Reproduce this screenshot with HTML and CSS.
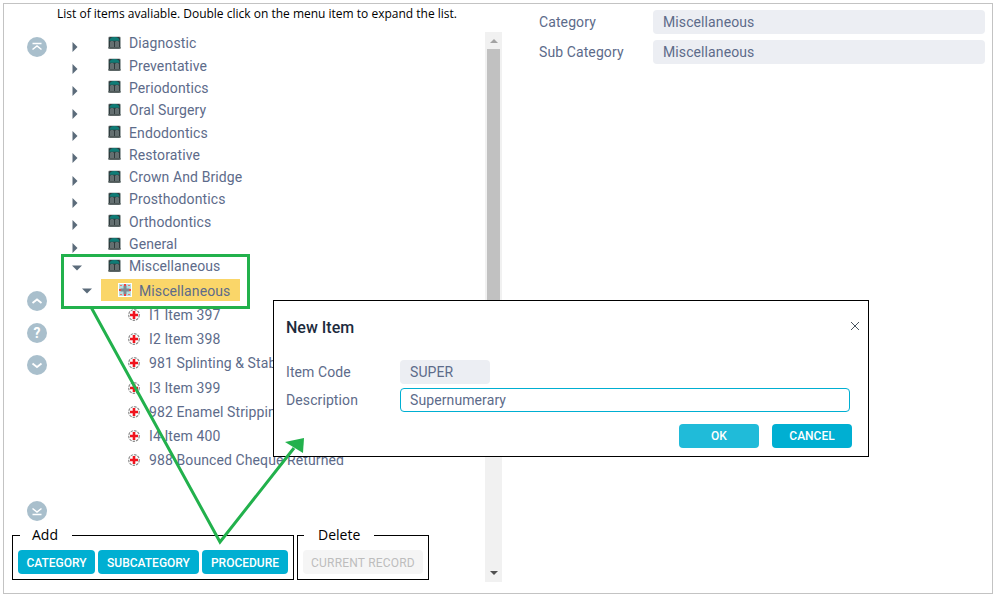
FILE: index.html
```html
<!DOCTYPE html>
<html lang="en">
<head>
<meta charset="utf-8">
<title>Items</title>
<link rel="stylesheet" href="styles.css">
</head>
<body>
<svg class="defs" width="0" height="0" aria-hidden="true">
  <symbol id="cat" viewBox="0 0 13 13">
    <rect x="0" y="0.500" width="13" height="12.500" rx="1.500" fill="#a3abab"/>
    <rect x="1" y="1" width="11" height="11.500" rx="1" fill="#2f3a3c"/>
    <path d="M1.500 4.800 Q1.500 1 6.500 1 Q11.500 1 11.500 4.800 Z" fill="#0f7c76"/>
    <path d="M2.500 5.500h3v5.500h-3zM7.500 5.500h3v5.500h-3z" fill="#9aa5a5"/>
    <path d="M3.500 6v5h1V6zM8.500 6v5h1V6z" fill="#2f3a3c"/>
    <rect x="0.500" y="11" width="12" height="1.500" fill="#505a5a"/>
  </symbol>
  <symbol id="sub" viewBox="0 0 14 14">
    <rect width="14" height="14" fill="#fff"/>
    <rect x="1" y="1" width="12" height="12" fill="#b5dde0"/>
    <path d="M5.500 2.500h3v3h3v3h-3v3h-3v-3h-3v-3h3z" fill="#7f8a94"/>
    <path d="M6 1h2v2H6zM6 11h2v2H6zM1 6h2v2H1zM11 6h2v2h-2z" fill="#ee4444"/>
    <path d="M2 2h2v1H2zM10 2h2v1h-2zM2 11h2v1H2zM10 11h2v1h-2z" fill="#f07070"/>
  </symbol>
  <symbol id="leaf" viewBox="0 0 12 12">
    <circle cx="6" cy="6" r="5.300" fill="#fff" stroke="#8c8c8c" stroke-width="1.200" stroke-dasharray="2.500 1"/>
    <path d="M4.700 2h2.600v2.700H10v2.600H7.300V10H4.700V7.300H2V4.700h2.700z" fill="#f0141e"/>
  </symbol>
  <symbol id="right" viewBox="0 0 6 10"><path d="M0.500 0L5.500 5L0.500 10Z" fill="#5b6b7a"/></symbol>
  <symbol id="down" viewBox="0 0 10 6"><path d="M0 0.500H10L5 5.500Z" fill="#5b6b7a"/></symbol>
</svg>

<div class="frame">
  <section class="left">
    <div class="left-main">
      <p class="intro">List of items avaliable. Double click on the menu item to expand the list.</p>
      <div class="browser">
        <nav class="rail">
          <button class="round round-top" type="button"><svg viewBox="0 0 20 20"><path d="M5.500 6.500h9M5.500 12.500L10 9l4.500 3.500" fill="none" stroke="#fff" stroke-width="1.500"/></svg></button>
          <button class="round round-up" type="button"><svg viewBox="0 0 20 20"><path d="M5.500 12L10 8.500l4.500 3.500" fill="none" stroke="#fff" stroke-width="1.800"/></svg></button>
          <button class="round round-help" type="button">?</button>
          <button class="round round-down" type="button"><svg viewBox="0 0 20 20"><path d="M5.500 8.500L10 12l4.500-3.500" fill="none" stroke="#fff" stroke-width="1.800"/></svg></button>
          <button class="round round-bottom" type="button"><svg viewBox="0 0 20 20"><path d="M5.500 7.500L10 11l4.500-3.500M5.500 13.500h9" fill="none" stroke="#fff" stroke-width="1.500"/></svg></button>
        </nav>
        <ul class="tree">
          <li class="row"><svg class="tog"><use href="#right"/></svg><svg class="ico"><use href="#cat"/></svg><span>Diagnostic</span></li>
          <li class="row"><svg class="tog"><use href="#right"/></svg><svg class="ico"><use href="#cat"/></svg><span>Preventative</span></li>
          <li class="row"><svg class="tog"><use href="#right"/></svg><svg class="ico"><use href="#cat"/></svg><span>Periodontics</span></li>
          <li class="row"><svg class="tog"><use href="#right"/></svg><svg class="ico"><use href="#cat"/></svg><span>Oral Surgery</span></li>
          <li class="row"><svg class="tog"><use href="#right"/></svg><svg class="ico"><use href="#cat"/></svg><span>Endodontics</span></li>
          <li class="row"><svg class="tog"><use href="#right"/></svg><svg class="ico"><use href="#cat"/></svg><span>Restorative</span></li>
          <li class="row"><svg class="tog"><use href="#right"/></svg><svg class="ico"><use href="#cat"/></svg><span>Crown And Bridge</span></li>
          <li class="row"><svg class="tog"><use href="#right"/></svg><svg class="ico"><use href="#cat"/></svg><span>Prosthodontics</span></li>
          <li class="row"><svg class="tog"><use href="#right"/></svg><svg class="ico"><use href="#cat"/></svg><span>Orthodontics</span></li>
          <li class="row"><svg class="tog"><use href="#right"/></svg><svg class="ico"><use href="#cat"/></svg><span>General</span></li>
          <li class="row open"><svg class="tog-d"><use href="#down"/></svg><svg class="ico"><use href="#cat"/></svg><span>Miscellaneous</span></li>
          <li class="subrow"><svg class="tog-d"><use href="#down"/></svg><div class="selected"><svg class="ico-sub"><use href="#sub"/></svg><span>Miscellaneous</span></div></li>
          <li class="leaf"><svg class="ico-leaf"><use href="#leaf"/></svg><span>I1 Item 397</span></li>
          <li class="leaf"><svg class="ico-leaf"><use href="#leaf"/></svg><span>I2 Item 398</span></li>
          <li class="leaf"><svg class="ico-leaf"><use href="#leaf"/></svg><span>981 Splinting &amp; Stabilization</span></li>
          <li class="leaf"><svg class="ico-leaf"><use href="#leaf"/></svg><span>I3 Item 399</span></li>
          <li class="leaf"><svg class="ico-leaf"><use href="#leaf"/></svg><span>982 Enamel Stripping</span></li>
          <li class="leaf"><svg class="ico-leaf"><use href="#leaf"/></svg><span>I4 Item 400</span></li>
          <li class="leaf"><svg class="ico-leaf"><use href="#leaf"/></svg><span>988 Bounced Cheque Returned</span></li>
        </ul>
      </div>
      <div class="actions">
        <fieldset class="group group-add">
          <legend>Add</legend>
          <button class="btn btn-category" type="button">CATEGORY</button>
          <button class="btn btn-subcategory" type="button">SUBCATEGORY</button>
          <button class="btn btn-procedure" type="button">PROCEDURE</button>
        </fieldset>
        <fieldset class="group group-delete">
          <legend>Delete</legend>
          <button class="btn btn-disabled" type="button">CURRENT RECORD</button>
        </fieldset>
      </div>
    </div>
    <div class="scrollbar">
      <svg class="sb-arrow" viewBox="0 0 8 4"><path d="M0 4L4 0L8 4Z" fill="#a3a3a3"/></svg>
      <div class="thumb"></div>
      <svg class="sb-arrow sb-arrow-down" viewBox="0 0 8 4"><path d="M0 0L8 0L4 4Z" fill="#505050"/></svg>
    </div>
  </section>

  <section class="details">
    <div class="detail-row"><label>Category</label><div class="value">Miscellaneous</div></div>
    <div class="detail-row"><label>Sub Category</label><div class="value">Miscellaneous</div></div>
  </section>

  <div class="modal">
    <header class="modal-head">
      <h2>New Item</h2>
      <svg class="close" viewBox="0 0 10 10"><path d="M1 1L9 9M9 1L1 9" stroke="#4a5560" stroke-width="1" fill="none"/></svg>
    </header>
    <div class="form-row"><label>Item Code</label><div class="value value-code">SUPER</div></div>
    <div class="form-row"><label>Description</label><div class="input">Supernumerary</div></div>
    <div class="modal-buttons">
      <button class="mbtn mbtn-ok" type="button">OK</button>
      <button class="mbtn" type="button">CANCEL</button>
    </div>
  </div>

  <svg class="overlay" viewBox="0 0 999 597" aria-hidden="true">
    <rect x="62.500" y="255.500" width="186" height="52" fill="none" stroke="#22b14c" stroke-width="3"/>
    <path d="M91.500 308L220 542L294 448" fill="none" stroke="#22b14c" stroke-width="3"/>
    <path d="M304 438L285 442L303 453Z" fill="#22b14c"/>
  </svg>
</div>
</body>
</html>
```
FILE: styles.css
```css
* { box-sizing: border-box; }
html, body { margin: 0; padding: 0; background: #fff; }
body { width: 999px; height: 597px; overflow: hidden; font-family: Roboto, "Liberation Sans", sans-serif; font-size: 14px; letter-spacing: 0.1px; color: #5d6b8a; }
.defs { position: absolute; }

.frame { position: relative; display: flex; width: 990px; height: 591px; margin: 3px 0 0 3px; border: 1px solid #c3c3c3; }

.left { display: flex; width: 498px; flex: none; }
.left-main { width: 481px; flex: none; }
.intro { height: 28px; margin: 0; padding: 2px 0 0 53px; font-family: "Open Sans", "Noto Sans", sans-serif; font-size: 12px; letter-spacing: 0; line-height: 16px; color: #000; white-space: nowrap; }

.browser { display: flex; height: 494px; overflow: hidden; }
.rail { display: flex; flex-direction: column; width: 58px; flex: none; padding: 5px 0 0 23px; }
.round { display: block; width: 20px; height: 20px; padding: 0; border: 0; border-radius: 50%; background: #a9bfcc; color: #fff; font: 700 14px/20px Roboto, sans-serif; }
.round svg { display: block; width: 20px; height: 20px; }
.round-up { margin-top: 234px; }
.round-help { margin-top: 12px; }
.round-down { margin-top: 12px; }
.round-bottom { margin-top: 126px; }

.tree { flex: 1; margin: 0; padding: 0.200px 0 0; list-style: none; white-space: nowrap; }
.row, .subrow, .leaf { display: flex; align-items: center; }
.row { height: 22.300px; }
.tog { width: 6px; height: 10px; margin: 7px 30px 0 10px; flex: none; }
.tog-d { width: 10px; height: 6px; margin: 3px 26px 0 10px; flex: none; }
.ico { width: 13px; height: 13px; margin: -2px 8px 0 0; flex: none; }
.subrow { height: 22px; margin: 2px 0 1.100px; }
.subrow .tog-d { margin: 2px 9px 0 20px; }
.selected { display: flex; align-items: center; width: 139px; height: 22px; padding-left: 17px; background: #fad669; }
.ico-sub { width: 14px; height: 14px; margin: -1px 7px 0 0; flex: none; }
.selected span { padding-top: 1px; }
.leaf { height: 24.300px; padding-left: 66px; }
.ico-leaf { width: 12px; height: 12px; margin-right: 9px; flex: none; }

.actions { display: flex; gap: 3px; margin: 0 0 0 8px; }
.group { display: flex; gap: 3px; height: 54px; margin: 0; padding: 6px 5px 5px; border: 1px solid #000; min-width: 0; }
.group-add { width: 282px; }
.group-delete { width: 132px; }
.group legend { padding: 0 14px 0 12px; margin-left: 2px; font-family: "Open Sans", "Noto Sans", sans-serif; font-size: 14px; letter-spacing: 0; line-height: 18px; color: #000; }
.group-delete legend { padding: 0 14px; margin-left: 1px; }
.btn { height: 24px; padding: 2px 0 0; border: 0; border-radius: 4px; background: #00afd2; color: #fff; font: 500 12px/22px Roboto, sans-serif; white-space: nowrap; }
.btn-category { width: 77px; }
.btn-subcategory { width: 101px; }
.btn-procedure { width: 86px; }
.btn-disabled { width: 120px; background: #f5f5f5; color: #bdbdbd; font-weight: 400; letter-spacing: 0.200px; }

.scrollbar { display: flex; flex-direction: column; align-items: center; width: 17px; height: 550px; margin-top: 28px; background: #f1f1f1; }
.sb-arrow { width: 8px; height: 4px; margin-top: 7px; flex: none; }
.thumb { width: 13px; height: 330px; margin-top: 6px; background: #c1c1c1; flex: none; }
.sb-arrow-down { margin-top: auto; margin-bottom: 7px; }

.details { flex: 1; padding: 6px 7px 0 37px; }
.detail-row { display: flex; align-items: center; height: 24px; margin-bottom: 6px; }
.detail-row label { width: 114px; flex: none; }
.value { flex: 1; height: 24px; padding-left: 10px; border-radius: 4px; background: #eceef3; line-height: 24px; }

.modal { position: absolute; left: 269px; top: 296px; width: 596px; height: 157px; padding: 0 18px 0 12px; border: 1px solid #000; background: #fff; }
.modal-head { display: flex; align-items: center; justify-content: space-between; height: 59px; padding: 0 0 6px; }
.modal-head h2 { margin: 0; font-size: 16px; font-weight: 500; letter-spacing: 0; color: #1d2b3d; }
.close { width: 10px; height: 10px; margin: -4px -10px 0 0; }
.form-row { display: flex; align-items: center; height: 24px; margin-bottom: 4px; }
.form-row label { width: 114px; flex: none; }
.value-code { flex: none; width: 90px; }
.input { flex: 1; height: 24px; padding-left: 9px; border: 1px solid #00afd2; border-radius: 4px; line-height: 22px; }
.modal-buttons { display: flex; justify-content: flex-end; gap: 13px; margin: 12px -2px 0 0; }
.mbtn { width: 80px; height: 24px; padding: 1px 0 0; border: 0; border-radius: 4px; background: #00afd2; color: #fff; font: 500 12px/23px Roboto, sans-serif; }
.mbtn-ok { background: #20bbd9; }

.overlay { position: absolute; left: -4px; top: -4px; width: 999px; height: 597px; pointer-events: none; }
```
